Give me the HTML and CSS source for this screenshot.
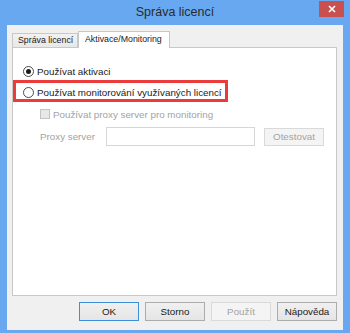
FILE: index.html
```html
<!DOCTYPE html>
<html lang="cs">
<head>
    <meta charset="UTF-8">
    <title>Správa licencí</title>
    <link rel="stylesheet" href="styles.css">
</head>
<body>
    <div class="window">
        <div class="titlebar">
            <span></span>
            <span class="title">Správa licencí</span>
            <span class="close">
                <svg width="8" height="8" viewBox="0 0 8 8">
                    <path d="M1 1 L7 7 M7 1 L1 7" stroke="#fff" stroke-width="1.6"/>
                </svg>
            </span>
        </div>

        <div class="client">
            <div class="tabs">
                <div class="tab">Správa licencí</div>
                <div class="tab active">Aktivace/Monitoring</div>
            </div>

            <div class="panel">
                <label class="row">
                    <span class="radio checked"></span>
                    <span>Používat aktivaci</span>
                </label>

                <div class="row marked">
                    <span class="radio"></span>
                    <span>Používat monitorování využívaných licencí</span>
                    <span class="highlight"></span>
                </div>

                <label class="row sub disabled">
                    <span class="check"></span>
                    <span>Používat proxy server pro monitoring</span>
                </label>

                <div class="proxy disabled">
                    <span class="proxy-label">Proxy server</span>
                    <span class="field"></span>
                    <button class="btn btn-disabled small">Otestovat</button>
                </div>
            </div>

            <div class="buttons">
                <button class="btn btn-default">OK</button>
                <button class="btn">Storno</button>
                <button class="btn btn-disabled">Použít</button>
                <button class="btn">Nápověda</button>
            </div>
        </div>
    </div>
</body>
</html>
```

FILE: styles.css
```css
body {
    margin: 0;
    font-family: 'Liberation Sans', Arial, sans-serif;
    font-size: 9.8px;
    color: #1a1a1a;
}
.window {
    width: 350px;
    height: 333px;
    background-color: #68a8f0;
    display: flex;
    flex-direction: column;
}
.titlebar {
    height: 25px;
    display: grid;
    grid-template-columns: 1fr auto 1fr;
    align-items: start;
}
.title {
    font-size: 12.5px;
    color: #2b2b2b;
    line-height: 25px;
}
.close {
    justify-self: end;
    margin: 1px 6px 0 0;
    width: 25px;
    height: 16px;
    background-color: #c9504f;
    display: flex;
    align-items: center;
    justify-content: center;
}
.client {
    flex: 1;
    margin: 0 7px 3px;
    background-color: #f0f0f0;
    padding: 6px 6px 0 5px;
    display: flex;
    flex-direction: column;
}
.tabs {
    display: flex;
    align-items: flex-end;
    height: 16px;
    font-size: 8.8px;
}
.tab {
    box-sizing: border-box;
    width: 66px;
    height: 14px;
    padding-left: 5px;
    line-height: 13px;
    border: 1px solid #c8c8c8;
    border-bottom: none;
    background: linear-gradient(#f2f2f2, #e8e8e8);
    white-space: nowrap;
}
.tab.active {
    position: relative;
    z-index: 1;
    width: 92px;
    height: 17px;
    margin-bottom: -1px;
    padding-left: 6px;
    line-height: 15px;
    background: #fff;
}
.panel {
    position: relative;
    box-sizing: border-box;
    height: 249px;
    background-color: #fff;
    border: 1px solid #c8c8c8;
    padding: 15px 0 0 10px;
}
.row {
    display: flex;
    align-items: center;
    gap: 3px;
    height: 16px;
    margin-bottom: 5px;
}
.radio {
    box-sizing: border-box;
    width: 11px;
    height: 11px;
    border: 1px solid #4a4a4a;
    border-radius: 50%;
    background-color: #fff;
    display: flex;
    align-items: center;
    justify-content: center;
}
.radio.checked::after {
    content: "";
    width: 5px;
    height: 5px;
    border-radius: 50%;
    background-color: #1a1a1a;
}
.marked {
    position: relative;
    margin-bottom: 6px;
}
.highlight {
    position: absolute;
    left: -10px;
    top: -4px;
    width: 215px;
    height: 22px;
    box-sizing: border-box;
    border: 3px solid #ec3b3b;
}
.sub {
    margin-left: 17px;
}
.check {
    box-sizing: border-box;
    width: 10px;
    height: 10px;
    border: 1px solid #c2c2c2;
    background-color: #e8e8e8;
}
.disabled {
    color: #a3a3a3;
}
.proxy {
    display: flex;
    align-items: center;
    margin: 1px 0 0 17px;
}
.proxy-label {
    width: 66px;
}
.field {
    box-sizing: border-box;
    width: 149px;
    height: 19px;
    border: 1px solid #d6d6d6;
    background-color: #fff;
}
.btn {
    box-sizing: border-box;
    width: 60px;
    height: 19px;
    padding: 0;
    font-family: inherit;
    font-size: 9.8px;
    color: #1a1a1a;
    border: 1px solid #acacac;
    background: linear-gradient(#f0f0f0, #e5e5e5);
}
.btn-default {
    border-color: #3c8fd8;
}
.btn-disabled {
    color: #a3a3a3;
    border-color: #d9d9d9;
    background: #f4f4f4;
}
.small {
    height: 18px;
    margin-left: 9px;
}
.buttons {
    display: flex;
    justify-content: flex-end;
    gap: 6px;
    margin-top: 6px;
}
```
